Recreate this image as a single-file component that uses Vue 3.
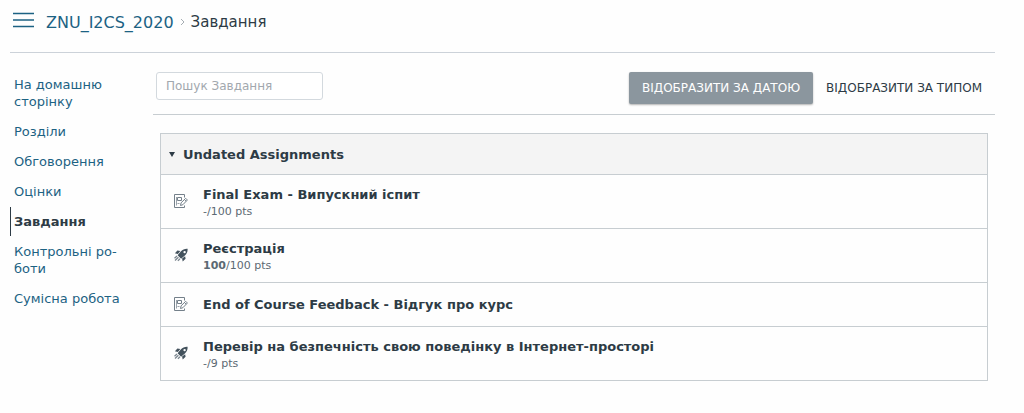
<template>
  <div class="page">
    <header class="top-bar">
      <button class="menu-toggle" type="button" aria-label="Menu">
        <svg viewBox="0 0 22 16" width="22" height="16">
          <path d="M0 1.5h21M0 8h21M0 14.5h21" fill="none" stroke="#1c6283" stroke-width="1.4" />
        </svg>
      </button>
      <nav class="crumbs">
        <a href="#">ZNU_I2CS_2020</a>
        <svg viewBox="0 0 5 8" width="5" height="8">
          <path d="M1 1l3 3-3 3" fill="none" stroke="#a5adb3" stroke-width="1" />
        </svg>
        <span>Завдання</span>
      </nav>
    </header>

    <div class="layout">
      <nav class="side-nav">
        <a
          v-for="link in links"
          :key="link"
          href="#"
          :class="{ active: link === current }"
        >{{ link }}</a>
      </nav>

      <main class="content">
        <div class="toolbar">
          <input v-model="search" class="search" type="text" placeholder="Пошук Завдання" aria-label="Пошук Завдання">
          <div class="modes">
            <button
              v-for="mode in modes"
              :key="mode"
              type="button"
              :class="{ selected: mode === selectedMode }"
              @click="selectedMode = mode"
            >{{ mode }}</button>
          </div>
        </div>

        <section class="group">
          <h2 class="group-header">
            <button type="button" :aria-expanded="open" @click="open = !open">
              <svg viewBox="0 0 6 5" width="6" height="5">
                <path d="M0 0h6L3 5z" fill="#2d3b45" />
              </svg>
              Undated Assignments
            </button>
          </h2>
          <ul v-if="open">
            <li v-for="item in filtered" :key="item.title" :class="{ short: !item.total }">
              <svg v-if="item.type === 'quiz'" class="icon" viewBox="0 0 14 14" width="14" height="14">
                <path
                  d="M13.6.8C10.800.6 8.700 1.500 7 3.300L3.600 7.200l3.500 3.500 3.800-3.200c1.900-1.700 2.900-4 2.700-6.700zM10.600 2.900a1.200 1.200 0 1 1 0 2.400 1.200 1.200 0 0 1 0-2.400z"
                  fill="#43525d"
                  fill-rule="evenodd"
                />
                <path d="M6.300 2.900L3.400 2.400.9 5.300l3 .7zM11.100 8.300l.5 2.500-2.900 2.700-.6-3z" fill="#43525d" />
                <path d="M3 7.900L.5 10.200M4.400 9.300L1 12.500M5.900 10.700L3.900 12.900" fill="none" stroke="#7c8790" stroke-width="1.3" />
              </svg>
              <svg v-else class="icon" viewBox="0 0 14 14" width="14" height="14">
                <g fill="none" stroke="#74808a">
                  <path d="M10.500 3.500v-3h-10v13h10v-2" />
                  <path d="M3.500 3.500h4v3h-4z" />
                  <path d="M2.500 3v8.500M3.500 9.500h2" stroke="#9aa3ab" />
                  <path d="M6.500 11.500l.6-2.700 4.600-4.500 1.700 1.700-4.500 4.700zM10.400 5.500l1.700 1.700" />
                </g>
              </svg>
              <div class="details">
                <a href="#">{{ item.title }}</a>
                <p v-if="item.total"><b v-if="item.score">{{ item.score }}</b><span v-else>-</span>/{{ item.total }} pts</p>
              </div>
            </li>
          </ul>
        </section>
      </main>
    </div>
  </div>
</template>

<script setup>
import { computed, ref } from 'vue'

const links = [
  'На домашню сторінку',
  'Розділи',
  'Обговорення',
  'Оцінки',
  'Завдання',
  'Контрольні ро\u00ADботи',
  'Сумісна робота'
]
const current = 'Завдання'

const modes = ['ВІДОБРАЗИТИ ЗА ДАТОЮ', 'ВІДОБРАЗИТИ ЗА ТИПОМ']
const selectedMode = ref(modes[0])

const search = ref('')
const open = ref(true)

const assignments = [
  { type: 'assignment', title: 'Final Exam - Випускний іспит', total: 100 },
  { type: 'quiz', title: 'Реєстрація', score: 100, total: 100 },
  { type: 'assignment', title: 'End of Course Feedback - Відгук про курс' },
  { type: 'quiz', title: 'Перевір на безпечність свою поведінку в Інтернет-просторі', total: 9 }
]

const filtered = computed(() =>
  assignments.filter(item => item.title.toLowerCase().includes(search.value.toLowerCase()))
)
</script>

<style>
body {
  margin: 0;
  background: #fefefe;
}
</style>

<style scoped>
.page {
  padding: 0 29px 0 10px;
  font-family: Verdana, 'DejaVu Sans', sans-serif;
  font-size: 12px;
  color: #2d3b45;
}

button,
input {
  font: inherit;
  color: inherit;
}

a {
  color: #1c6283;
  text-decoration: none;
}

.top-bar {
  display: flex;
  align-items: center;
  gap: 11px;
  height: 53px;
  box-sizing: border-box;
  padding: 0 0 8px 3px;
  border-bottom: 1px solid #ccd2d9;
}

.menu-toggle {
  display: flex;
  padding: 0;
  margin-bottom: 4px;
  border: 0;
  background: none;
  cursor: pointer;
}

.crumbs {
  display: flex;
  align-items: center;
  gap: 6px;
  font-size: 15px;
}

.crumbs a {
  font-size: 16px;
}

.layout {
  display: flex;
}

.side-nav {
  display: flex;
  flex-direction: column;
  gap: 1px;
  flex: 0 0 143px;
  box-sizing: border-box;
  padding: 17px 20px 0 0;
}

.side-nav a {
  padding: 6px 0 6px 4px;
  font-size: 13px;
  line-height: 17px;
}

.side-nav .active {
  padding-left: 3px;
  border-left: 1px solid #2d3b45;
  font-weight: bold;
  color: #2d3b45;
}

.content {
  flex: 1;
  min-width: 0;
}

.toolbar {
  display: flex;
  justify-content: space-between;
  align-items: flex-start;
  padding: 19px 0 10px 3px;
  border-bottom: 1px solid #c7cdd1;
}

.search {
  width: 167px;
  height: 28px;
  box-sizing: border-box;
  padding: 0 9px;
  border: 1px solid #d3d9de;
  border-radius: 3px;
  background: #fff;
}

.search::placeholder {
  color: #a2a8ae;
}

.modes {
  display: flex;
}

.modes button {
  height: 32px;
  padding: 0 13px;
  border: 0;
  border-radius: 2px;
  background: none;
  white-space: nowrap;
  cursor: pointer;
}

.modes .selected {
  background: #8b969e;
  color: #fff;
  box-shadow: 0 1px 2px rgba(0, 0, 0, 0.3);
}

.group {
  margin: 18px 7px 0;
  border: 1px solid #c7cdd1;
}

.group-header {
  margin: 0;
  background: #f4f4f4;
  font-size: 13px;
}

.group-header button {
  display: flex;
  align-items: center;
  gap: 8px;
  width: 100%;
  height: 40px;
  padding: 0 8px;
  border: 0;
  background: none;
  cursor: pointer;
}

.group ul {
  margin: 0;
  padding: 0;
  list-style: none;
}

.group li {
  display: flex;
  align-items: center;
  gap: 15px;
  min-height: 53px;
  padding: 0 13px;
  border-top: 1px solid #c7cdd1;
}

.group .short {
  min-height: 43px;
}

.icon {
  flex: none;
  margin-bottom: 2px;
}

.details a {
  font-size: 13px;
  font-weight: bold;
  line-height: 20px;
  color: #2d3b45;
}

.details p {
  margin: 0;
  font-size: 11px;
  line-height: 14px;
  color: #5c6973;
}
</style>
